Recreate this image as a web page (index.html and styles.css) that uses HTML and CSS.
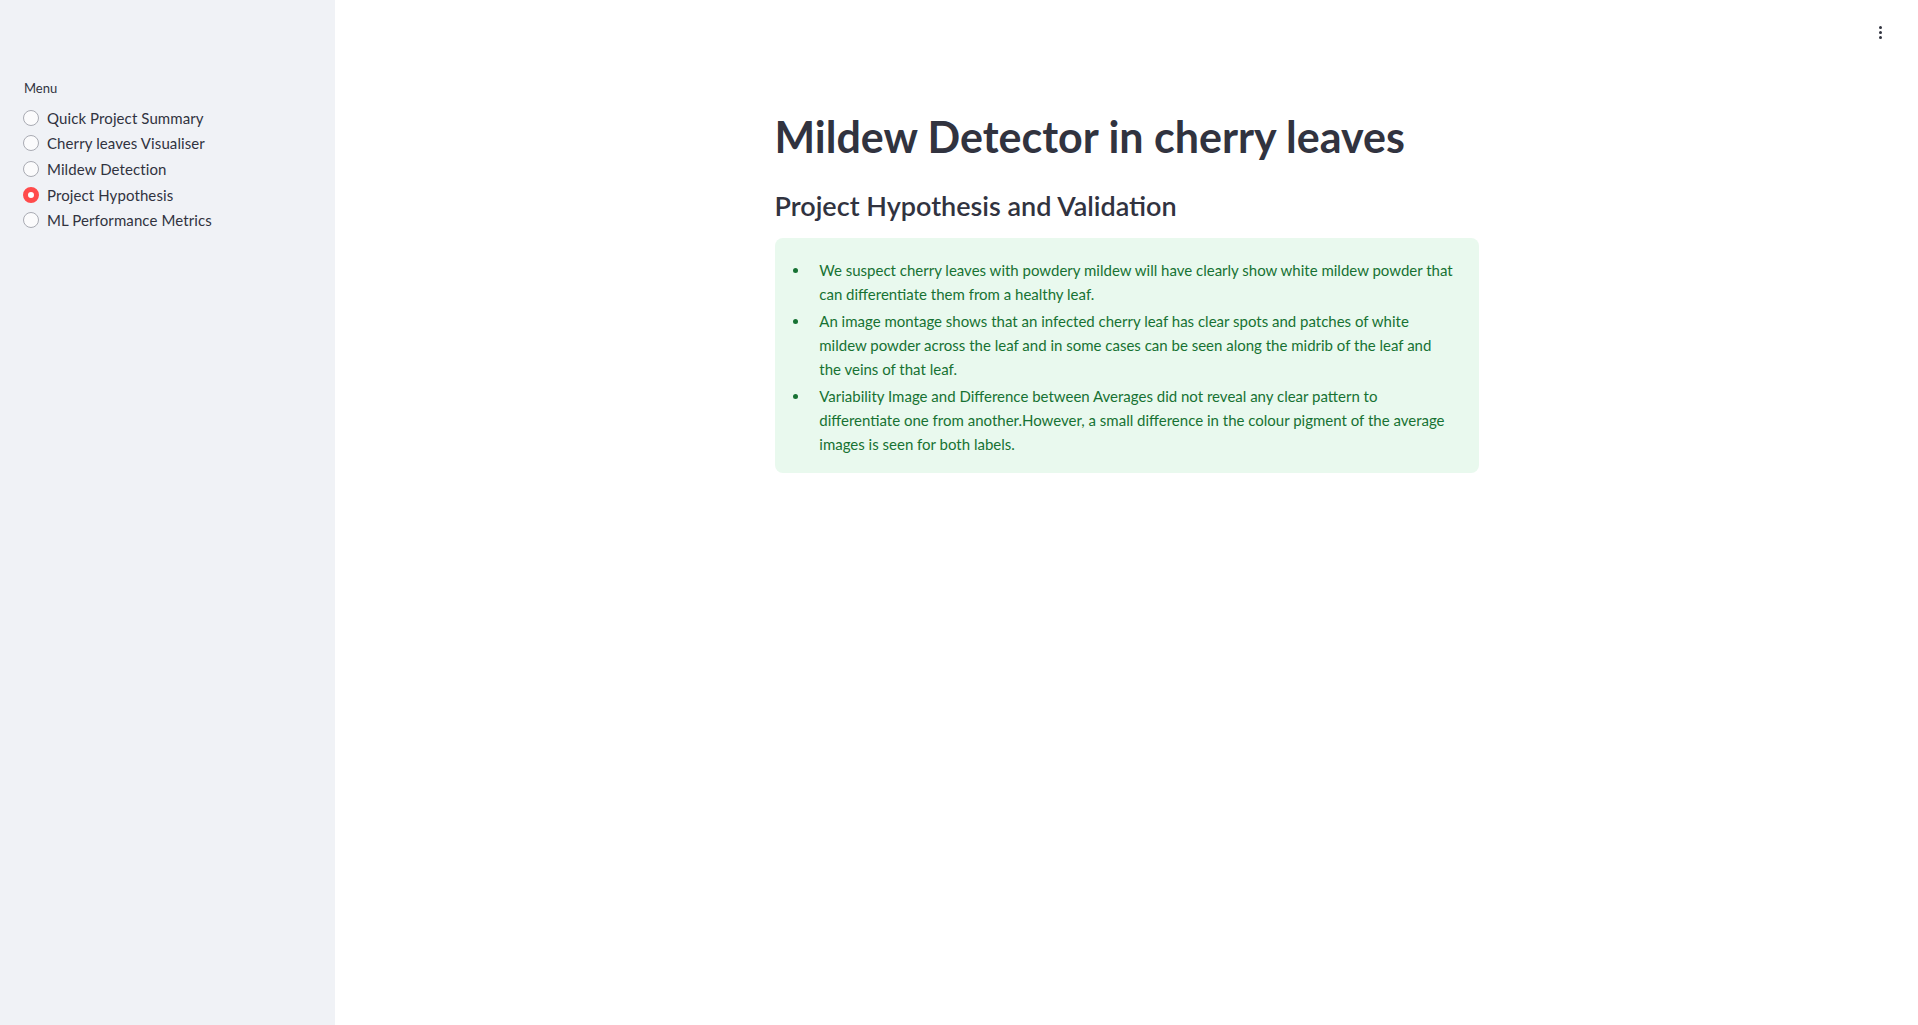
FILE: index.html
```html
<!DOCTYPE html>
<html lang="en">
<head>
<meta charset="utf-8">
<title>Mildew Detector</title>
<link rel="stylesheet" href="styles.css">
</head>
<body>
<div class="app">
  <aside class="sidebar">
    <div class="radio-group">
      <div class="radio-label">Menu</div>
      <label class="radio"><span class="dot"></span><span class="opt">Quick Project Summary</span></label>
      <label class="radio"><span class="dot"></span><span class="opt">Cherry leaves Visualiser</span></label>
      <label class="radio"><span class="dot"></span><span class="opt">Mildew Detection</span></label>
      <label class="radio selected"><span class="dot"></span><span class="opt">Project Hypothesis</span></label>
      <label class="radio"><span class="dot"></span><span class="opt">ML Performance Metrics</span></label>
    </div>
  </aside>
  <main class="main">
    <header class="topbar">
      <button class="kebab" aria-label="Main menu"><span></span><span></span><span></span></button>
    </header>
    <div class="block">
      <h1 class="title">Mildew Detector in cherry leaves</h1>
      <h3 class="subheader">Project Hypothesis and Validation</h3>
      <div class="alert-success">
        <ul>
          <li>We suspect cherry leaves with powdery mildew will have clearly show white mildew powder that can differentiate them from a healthy leaf.</li>
          <li>An image montage shows that an infected cherry leaf has clear spots and patches of white<br>mildew powder across the leaf and in some cases can be seen along the midrib of the leaf and<br>the veins of that leaf.</li>
          <li>Variability Image and Difference between Averages did not reveal any clear pattern to<br>differentiate one from another.However, a small difference in the colour pigment of the average<br>images is seen for both labels.</li>
        </ul>
      </div>
    </div>
  </main>
</div>
</body>
</html>
```

FILE: styles.css
```css
html, body {
  margin: 0;
  padding: 0;
  height: 100%;
}
body {
  font-family: "Lato", "Noto Sans", sans-serif;
  color: #31333f;
  background: #ffffff;
}
.app {
  display: flex;
  min-height: 100vh;
}
.sidebar {
  width: 335px;
  flex: 0 0 335px;
  background: #f0f2f6;
  box-sizing: border-box;
  padding: 80px 24px 0 23px;
}
.radio-group {
  display: flex;
  flex-direction: column;
}
.radio-label {
  font-size: 13px;
  line-height: 18px;
  margin: -1px 0 8px 1px;
  color: #31333f;
}
.radio {
  display: flex;
  align-items: center;
  gap: 8px;
  height: 25.6px;
  font-size: 15px;
  letter-spacing: 0.1px;
  cursor: pointer;
}
.dot {
  width: 16px;
  height: 16px;
  box-sizing: border-box;
  border-radius: 50%;
  border: 1px solid #a9abb3;
  background: #fbfbfc;
  flex: 0 0 16px;
}
.radio.selected .dot {
  border: 5px solid #ff4b4b;
  background: #ffffff;
}
.main {
  flex: 1;
  position: relative;
}
.topbar {
  height: 0;
}
.kebab {
  position: absolute;
  top: 23px;
  right: 32px;
  width: 12px;
  height: 18px;
  padding: 0;
  border: 0;
  background: transparent;
  display: flex;
  flex-direction: column;
  align-items: center;
  justify-content: center;
  gap: 2px;
}
.kebab span {
  width: 3px;
  height: 3px;
  border-radius: 50%;
  background: #31333f;
}
.block {
  width: 704px;
  margin: 0 auto;
  padding-top: 111px;
}
.title {
  font-size: 43px;
  font-weight: 700;
  line-height: 52.8px;
  margin: 0;
  color: #31333f;
}
.subheader {
  font-size: 27px;
  font-weight: 600;
  line-height: 33.6px;
  margin: 25px 0 0 0;
  color: #31333f;
}
.alert-success {
  margin-top: 16px;
  background: #e9f9ee;
  color: #177233;
  border-radius: 8px;
  padding: 16px 16px 14px;
  font-size: 15px;
  line-height: 24px;
}
.alert-success ul {
  margin: 0;
  padding: 0;
}
.alert-success li {
  margin: 3.2px 0 3.2px 19.2px;
  padding-left: 9.6px;
}
```
